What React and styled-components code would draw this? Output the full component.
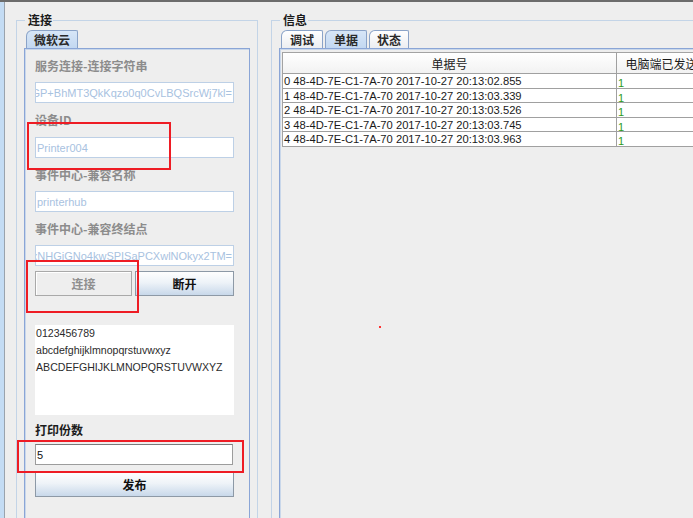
import React from 'react';
import styled, { createGlobalStyle } from 'styled-components';

const Global = createGlobalStyle`
  html, body { margin: 0; padding: 0; background: #eeeeee; }
  body { font-family: "Liberation Sans", Arial, "Noto Sans CJK SC", sans-serif; }
`

const Window = styled.div`
  position: relative;
  width: 693px;
  height: 518px;
  overflow: hidden;
  display: flex;
  background: #eeeeee;
  border-top: 2px solid #6c6c6c;
  box-sizing: border-box;
`

const Strip = styled.div`
  width: 4px;
  flex: none;
  background: #c4dcf4;
  border-right: 1px solid #9aa3ad;
`

const Group = styled.fieldset`
  flex: none;
  width: ${p => p.$width}px;
  margin: 11px 0 0 ${p => p.$left}px;
  padding: 3px 7px 0 7px;
  border: 1px solid #c3d4e7;
  border-bottom: none;
  min-width: 0;
  box-sizing: border-box;
`

const Legend = styled.legend`
  padding: 0 1px 0 3px;
  margin-left: 1px;
  font-family: "Noto Sans CJK SC", sans-serif;
  font-size: 12px;
  font-weight: 700;
  line-height: 14px;
  color: #1a1a1a;
`

const TabRow = styled.div`
  display: flex;
  gap: 2px;
  padding-left: 2px;
  height: 18px;
`

const Tab = styled.div`
  height: 18px;
  box-sizing: border-box;
  padding: 0 ${p => p.$pad}px;
  border: 1px solid #8aa3c8;
  border-bottom: none;
  border-radius: 6px 2px 0 0;
  background: ${p => p.$active ? 'linear-gradient(#d7e6f7, #c3d8f1)' : 'linear-gradient(#ffffff, #eceef1)'};
  font-family: "Noto Sans CJK SC", sans-serif;
  font-size: 12px;
  font-weight: 700;
  line-height: 17px;
  color: #2a2a2a;
`

const Panel = styled.div`
  height: ${p => p.$height}px;
  border: 1px solid #8aa5d6;
  border-bottom: none;
  box-shadow: inset 1px 1px 0 #c9d7ea;
  box-sizing: border-box;
  padding: ${p => p.$pad};
  display: flex;
  flex-direction: column;
`

const Label = styled.div`
  height: ${p => p.$h}px;
  line-height: ${p => p.$h}px;
  font-family: "Noto Sans CJK SC", sans-serif;
  font-size: 12px;
  font-weight: 700;
  color: ${p => p.$enabled ? '#1c1c1c' : '#8c8c8c'};
  white-space: nowrap;
`

const Field = styled.div`
  height: 21px;
  width: ${p => p.$w || 199}px;
  box-sizing: border-box;
  background: #ffffff;
  border: 1px solid ${p => p.$enabled ? '#9c9c9c' : '#bdd0e6'};
  border-top-color: ${p => p.$enabled ? '#7a7a7a' : '#bdd0e6'};
  display: flex;
  justify-content: ${p => p.$end ? 'flex-end' : 'flex-start'};
  align-items: center;
  overflow: hidden;
  padding: 0 1px;
  font-size: 11px;
  color: ${p => p.$enabled ? '#111111' : '#a8c2df'};
  white-space: nowrap;
`

const ButtonRow = styled.div`
  display: flex;
  gap: 3px;
  margin-top: 5px;
`

const Button = styled.div`
  width: ${p => p.$w}px;
  height: 25px;
  box-sizing: border-box;
  display: flex;
  align-items: center;
  justify-content: center;
  font-family: "Noto Sans CJK SC", sans-serif;
  font-size: 12px;
  font-weight: 700;
  border: 1px solid ${p => p.$disabled ? '#a9a9a9' : '#8d99a6'};
  background: ${p => p.$disabled ? '#eeeeee' : 'linear-gradient(#fefefe 0%, #eef3f8 45%, #c8d8ea 100%)'};
  color: ${p => p.$disabled ? '#8f8f8f' : '#111111'};
  box-shadow: ${p => p.$disabled ? 'inset 1px 1px 0 #ffffff' : 'none'};
`

const TextArea = styled.div`
  margin-top: 29px;
  width: 199px;
  height: 90px;
  box-sizing: border-box;
  background: #ffffff;
  padding: 0 0 0 1px;
  font-size: 10.6px;
  line-height: 17px;
  color: #2b2b2b;
`

const Table = styled.div`
  width: 440px;
  border-top: 1px solid #a3a3a3;
  border-left: 1px solid #a3a3a3;
  background: #ffffff;
`

const Row = styled.div`
  display: grid;
  grid-template-columns: 334px 90px;
  height: ${p => p.$h}px;
  border-bottom: 1px solid #a0a0a0;
  box-sizing: border-box;
  background: ${p => p.$head ? 'linear-gradient(#ffffff, #f2f2f2)' : '#ffffff'};
`

const Cell = styled.div`
  border-right: 1px solid #a0a0a0;
  overflow: hidden;
  white-space: nowrap;
  padding-left: ${p => p.$head ? 0 : 1}px;
  text-align: ${p => p.$head ? 'center' : 'left'};
  font-family: ${p => p.$head ? '"Noto Sans CJK SC", sans-serif' : '"Liberation Sans", Arial, sans-serif'};
  font-size: ${p => p.$head ? '12px' : '11.2px'};
  line-height: ${p => p.$head ? '21px' : '14px'};
  color: ${p => p.$green ? '#2e9b1a' : '#1a1a1a'};
  ${p => p.$green ? 'padding-top: 2px; font-size: 11px;' : ''}
`

const Mark = styled.div`
  position: absolute;
  left: ${p => p.$x}px;
  top: ${p => p.$y}px;
  width: ${p => p.$w}px;
  height: ${p => p.$h}px;
  border: 2px solid #ee1c24;
  box-sizing: border-box;
  pointer-events: none;
`

const Dot = styled.div`
  position: absolute;
  left: 379px;
  top: 324px;
  width: 2px;
  height: 2px;
  background: #ff3030;
`

const rows = [
  '0 48-4D-7E-C1-7A-70 2017-10-27 20:13:02.855',
  '1 48-4D-7E-C1-7A-70 2017-10-27 20:13:03.339',
  '2 48-4D-7E-C1-7A-70 2017-10-27 20:13:03.526',
  '3 48-4D-7E-C1-7A-70 2017-10-27 20:13:03.745',
  '4 48-4D-7E-C1-7A-70 2017-10-27 20:13:03.963',
]

export default function App() {
  return (
    <>
      <Global />
      <Window>
        <Strip />
        <Group $left={11} $width={242}>
          <Legend>连接</Legend>
          <TabRow>
            <Tab $active $pad={7}>微软云</Tab>
          </TabRow>
          <Panel $height={480} $pad="0 0 0 10px">
            <Label $h={33}>服务连接-连接字符串</Label>
            <Field $end>Endpoint=sb://printerhub;SharedAccessKeyName=RootManageSharedAccessKey;SharedAccessKey=GP+BhMT3QkKqzo0q0CvLBQSrcWj7kl=</Field>
            <Label $h={34}>设备ID</Label>
            <Field>Printer004</Field>
            <Label $h={33}>事件中心-兼容名称</Label>
            <Field>printerhub</Field>
            <Label $h={33}>事件中心-兼容终结点</Label>
            <Field $end>sb://ihsuprodbyres.servicebus.windows.net/;SharedAccessKey=xNHGjGNo4kwSPISaPCXwlNOkyx2TM=</Field>
            <ButtonRow>
              <Button $disabled $w={97}>连接</Button>
              <Button $w={99}>断开</Button>
            </ButtonRow>
            <TextArea>
              0123456789<br />
              abcdefghijklmnopqrstuvwxyz<br />
              ABCDEFGHIJKLMNOPQRSTUVWXYZ
            </TextArea>
            <Label $h={29} $enabled>打印份数</Label>
            <Field $enabled $w={198}>5</Field>
            <Button $w={199} style={{ marginTop: 7 }}>发布</Button>
          </Panel>
        </Group>
        <Group $left={13} $width={440}>
          <Legend>信息</Legend>
          <TabRow>
            <Tab $pad={8}>调试</Tab>
            <Tab $active $pad={8}>单据</Tab>
            <Tab $pad={7}>状态</Tab>
          </TabRow>
          <Panel $height={480} $pad="3px 0 0 2px">
            <Table>
              <Row $head $h={21}>
                <Cell $head>单据号</Cell>
                <Cell $head>电脑端已发送</Cell>
              </Row>
              {rows.map(r => (
                <Row key={r} $h={14.6}>
                  <Cell>{r}</Cell>
                  <Cell $green>1</Cell>
                </Row>
              ))}
            </Table>
          </Panel>
        </Group>
        <Mark $x={27} $y={120} $w={144} $h={48} />
        <Mark $x={26} $y={258} $w={113} $h={53} />
        <Mark $x={17} $y={438} $w={227} $h={33} />
        <Dot />
      </Window>
    </>
  )
}
